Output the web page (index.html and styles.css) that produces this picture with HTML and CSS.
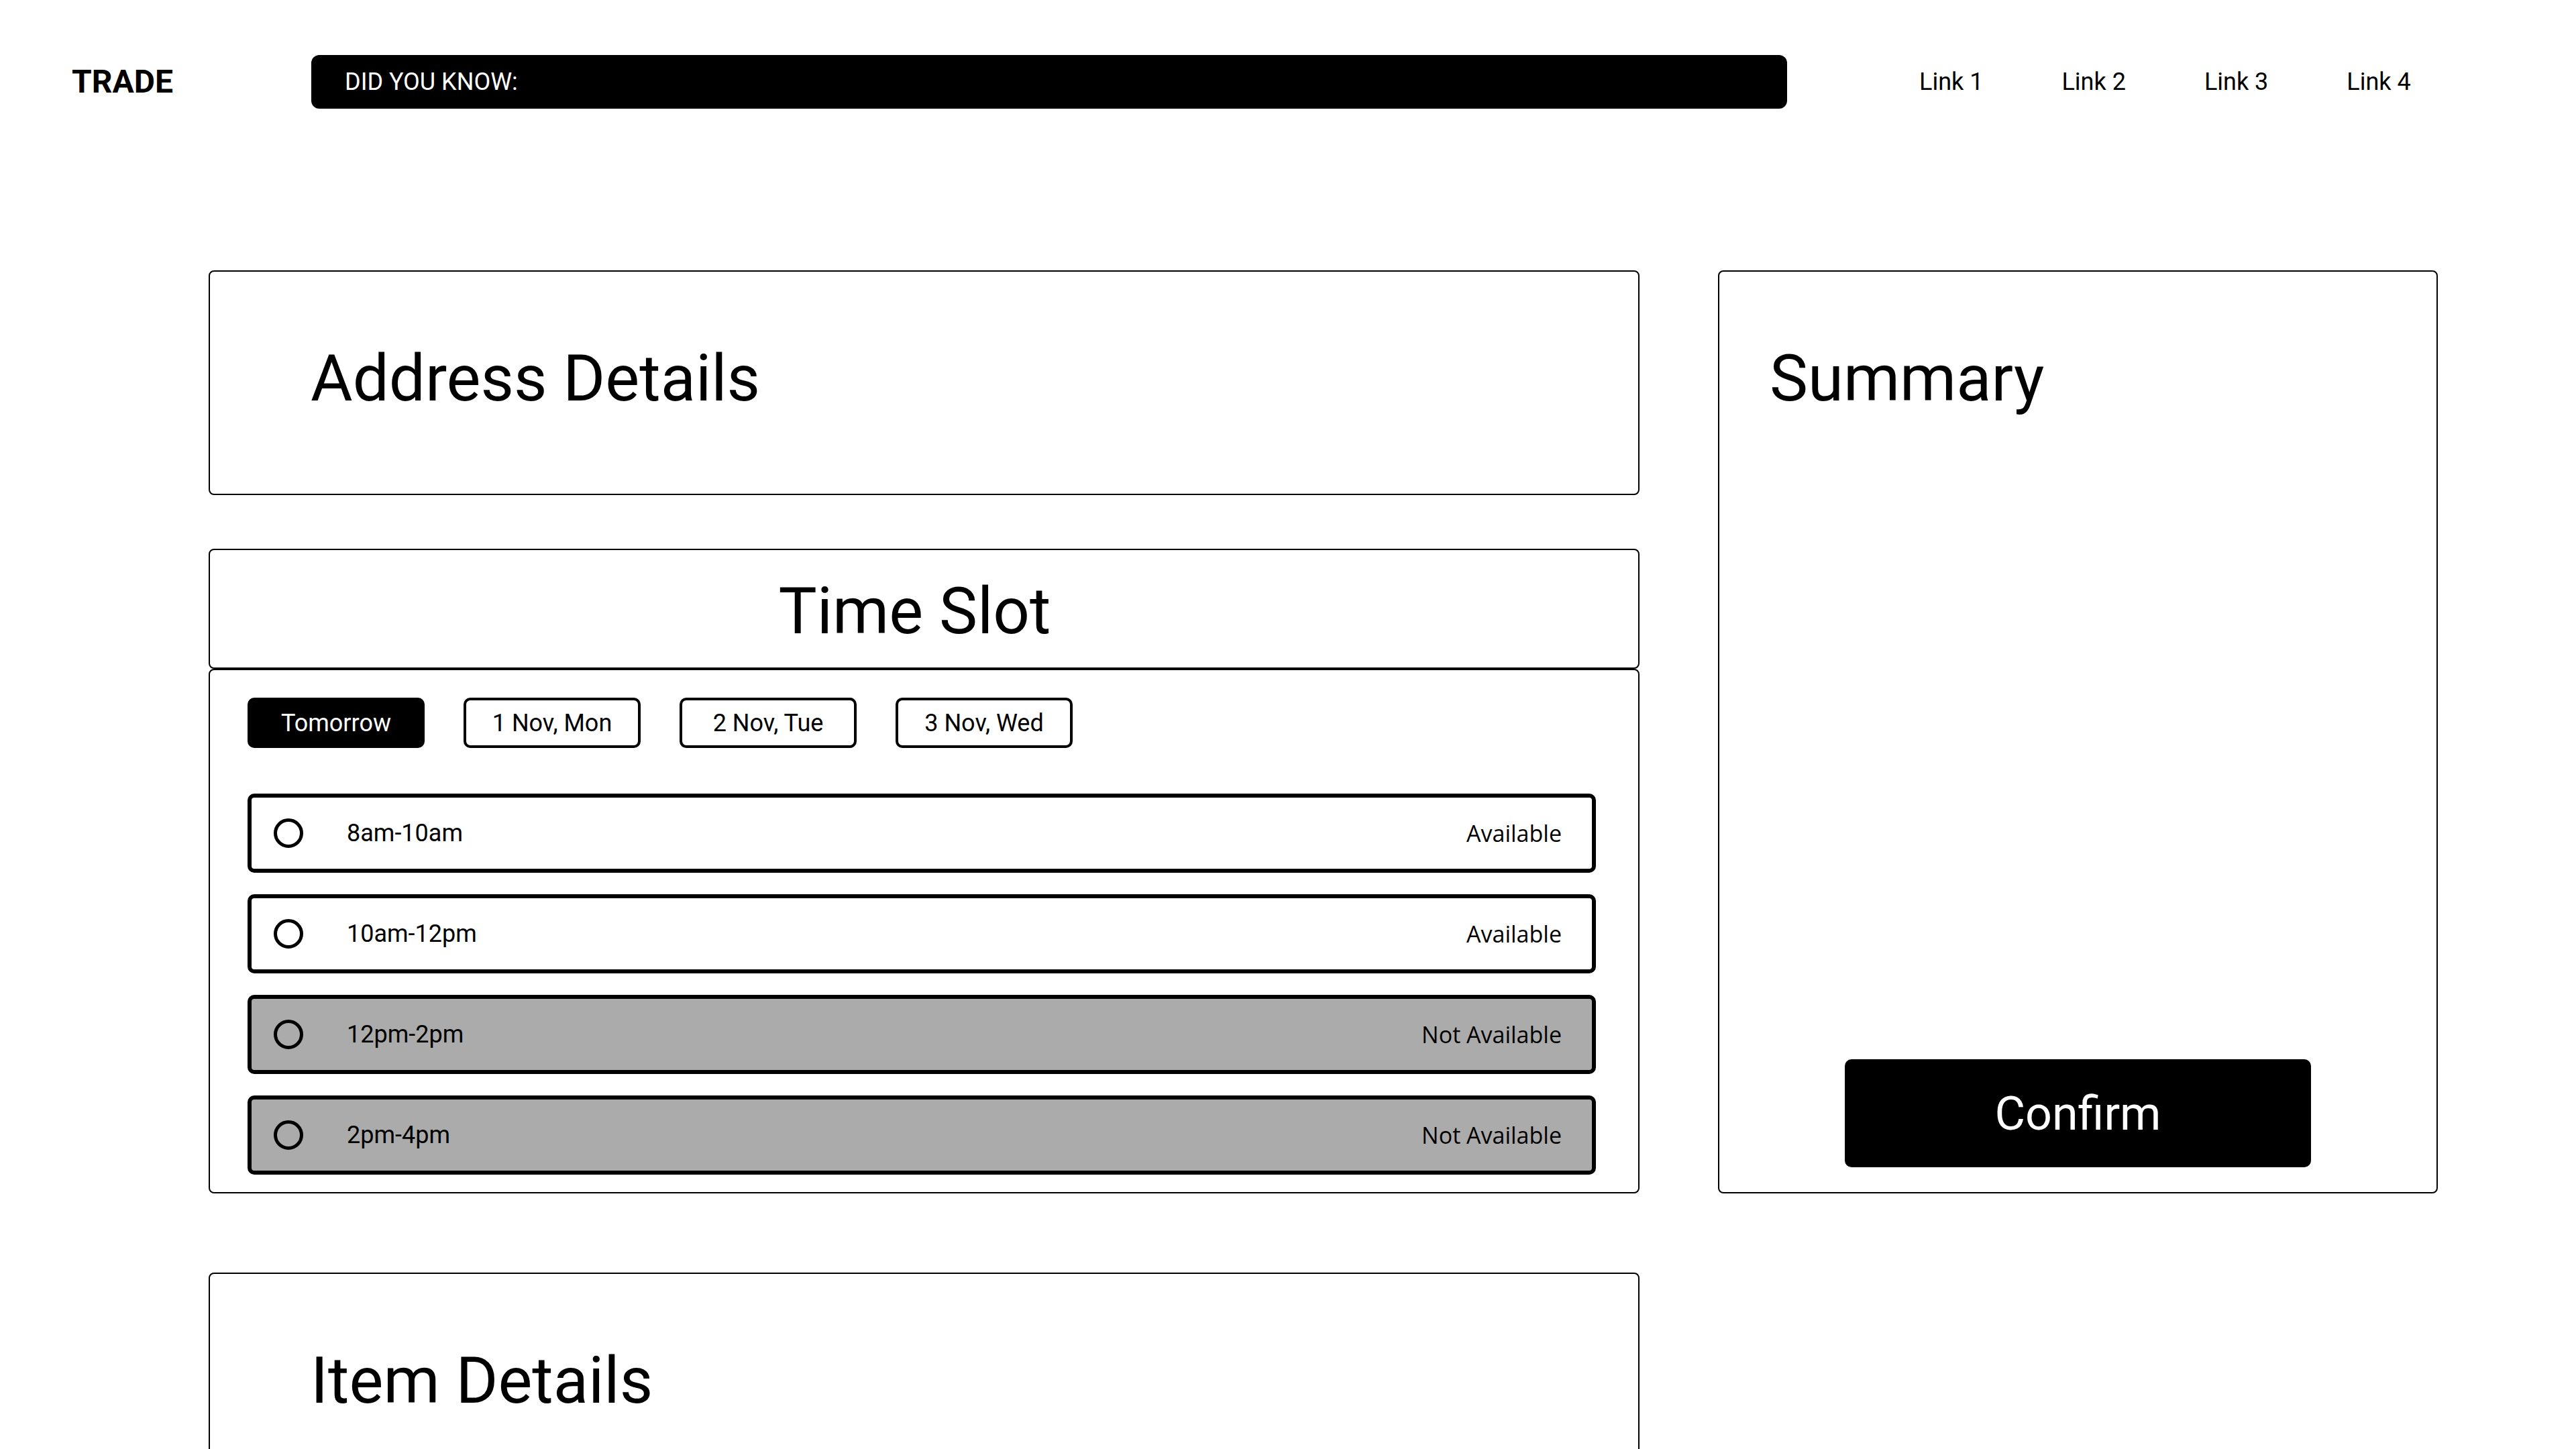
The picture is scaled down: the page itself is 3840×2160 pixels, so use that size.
FILE: index.html
```html
<!DOCTYPE html>
<html lang="en">
<head>
<meta charset="utf-8">
<title>Trade - Time Slot</title>
<link rel="stylesheet" href="styles.css">
</head>
<body>
<header class="topbar">
  <div class="logo">TRADE</div>
  <div class="ticker">DID YOU KNOW:</div>
  <nav class="nav">
    <a class="nav-link" href="#">Link 1</a>
    <a class="nav-link" href="#">Link 2</a>
    <a class="nav-link" href="#">Link 3</a>
    <a class="nav-link" href="#">Link 4</a>
  </nav>
</header>

<main class="layout">
  <section class="card address">
    <h2 class="card-title">Address Details</h2>
  </section>

  <section class="timeslot">
    <div class="card timeslot-head">
      <h2 class="card-title">Time Slot</h2>
    </div>
    <div class="card timeslot-body">
      <div class="dates">
        <button class="date active">Tomorrow</button>
        <button class="date">1 Nov, Mon</button>
        <button class="date">2 Nov, Tue</button>
        <button class="date">3 Nov, Wed</button>
      </div>
      <div class="slots">
        <div class="slot">
          <span class="radio"></span>
          <span class="slot-time">8am-10am</span>
          <span class="slot-status">Available</span>
        </div>
        <div class="slot">
          <span class="radio"></span>
          <span class="slot-time">10am-12pm</span>
          <span class="slot-status">Available</span>
        </div>
        <div class="slot disabled">
          <span class="radio"></span>
          <span class="slot-time">12pm-2pm</span>
          <span class="slot-status">Not Available</span>
        </div>
        <div class="slot disabled">
          <span class="radio"></span>
          <span class="slot-time">2pm-4pm</span>
          <span class="slot-status">Not Available</span>
        </div>
      </div>
    </div>
  </section>

  <aside class="card summary">
    <h2 class="card-title">Summary</h2>
    <button class="confirm">Confirm</button>
  </aside>

  <section class="card item">
    <h2 class="card-title">Item Details</h2>
  </section>
</main>
</body>
</html>
```

FILE: styles.css
```css
* {
  box-sizing: border-box;
}

html, body {
  margin: 0;
  padding: 0;
  background: #ffffff;
  color: #000000;
  font-family: Roboto, "Liberation Sans", sans-serif;
}

body {
  width: 3840px;
  height: 2160px;
  overflow: hidden;
}

/* Header */
.topbar {
  display: flex;
  align-items: center;
  padding: 82px 0 0 107px;
  height: 162px;
}

.logo {
  width: 357px;
  font-weight: 700;
  font-size: 48px;
  line-height: 1;
}

.ticker {
  width: 2200px;
  height: 80px;
  background: #000000;
  color: #ffffff;
  border-radius: 12px;
  display: flex;
  align-items: center;
  padding-left: 50px;
  font-size: 36px;
}

.nav {
  display: flex;
  gap: 117px;
  margin-left: 197px;
}

.nav-link {
  color: #000000;
  text-decoration: none;
  font-size: 36px;
}

/* Main grid */
.layout {
  display: grid;
  grid-template-columns: 2133px 1073px;
  column-gap: 117px;
  row-gap: 80px;
  margin: 241px 0 0 311px;
  align-items: start;
}

.card {
  border: 2px solid #000000;
  border-radius: 8px;
  background: #ffffff;
}

.card-title {
  margin: 0;
  font-weight: 400;
  font-size: 96px;
  line-height: normal;
}

.address,
.item {
  height: 335px;
  padding: 103px 0 0 150px;
}

.address {
  grid-column: 1;
  grid-row: 1;
}

.timeslot {
  grid-column: 1;
  grid-row: 2;
}

.item {
  grid-column: 1;
  grid-row: 3;
  margin-top: 38px;
}

.summary {
  grid-column: 2;
  grid-row: 1 / 3;
  align-self: stretch;
  display: flex;
  flex-direction: column;
  justify-content: space-between;
  align-items: center;
  padding: 103px 0 37px 0;
}

.summary .card-title {
  align-self: flex-start;
  padding-left: 75px;
}

.confirm {
  width: 695px;
  height: 161px;
  border: none;
  border-radius: 10px;
  background: #000000;
  color: #ffffff;
  font-family: Roboto, "Liberation Sans", sans-serif;
  font-size: 70px;
  cursor: pointer;
}

/* Time slot */
.timeslot-head {
  height: 179px;
  padding: 35px 28px 0 0;
  text-align: center;
}

.timeslot-body {
  height: 782px;
  padding: 41px 63px 0 56px;
}

.dates {
  display: flex;
  gap: 58px;
}

.date {
  width: 264px;
  height: 75px;
  border: 4px solid #000000;
  border-radius: 10px;
  background: #ffffff;
  color: #000000;
  font-family: Roboto, "Liberation Sans", sans-serif;
  font-size: 36px;
  padding: 0;
}

.date.active {
  background: #000000;
  color: #ffffff;
}

.slots {
  display: flex;
  flex-direction: column;
  gap: 32px;
  margin-top: 68px;
}

.slot {
  height: 118px;
  border: 6px solid #000000;
  border-radius: 10px;
  background: #ffffff;
  display: flex;
  align-items: center;
  padding: 0 45px 0 33px;
}

.slot.disabled {
  background: #ababab;
}

.radio {
  width: 44px;
  height: 44px;
  border: 5px solid #000000;
  border-radius: 50%;
  flex: none;
}

.slot-time {
  margin-left: 65px;
  font-size: 36px;
}

.slot-status {
  margin-left: auto;
  font-family: "Open Sans", "Noto Sans", sans-serif;
  font-size: 34px;
}
```
